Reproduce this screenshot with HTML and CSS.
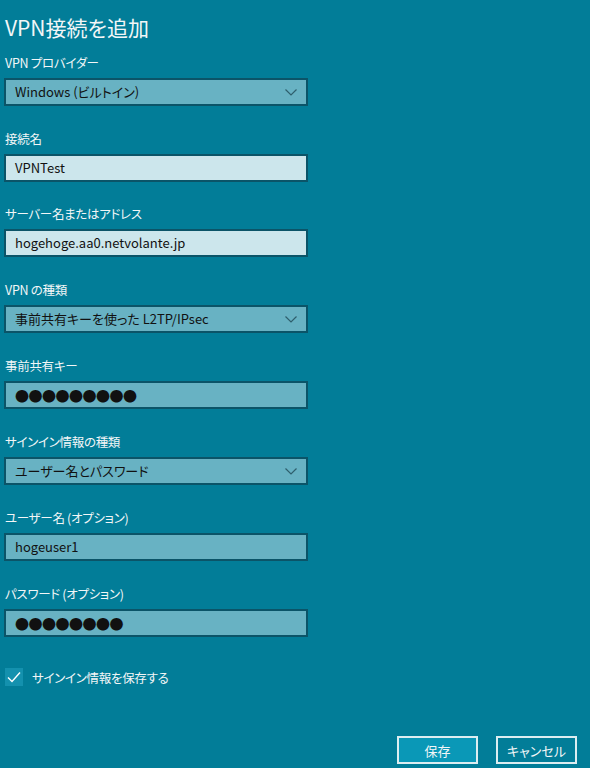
FILE: index.html
```html
<!doctype html>
<html>
  <head>
    <meta charset="utf-8">
    <title>VPN接続を追加</title>
    <link rel="stylesheet" href="styles.css">
  </head>
  <body>
    <div class="panel">
      <h1 class="title">VPN接続を追加</h1>

      <div class="field">
        <div class="label">VPN プロバイダー</div>
        <div class="box select">Windows (ビルトイン)
          <svg class="chev" width="12" height="7" viewBox="0 0 12 7"><polyline points="0.5,0.5 6,6 11.5,0.5" fill="none" stroke="#2f5f6c" stroke-width="1.2"/></svg>
        </div>
      </div>

      <div class="field">
        <div class="label">接続名</div>
        <div class="box text">VPNTest</div>
      </div>

      <div class="field">
        <div class="label">サーバー名またはアドレス</div>
        <div class="box text">hogehoge.aa0.netvolante.jp</div>
      </div>

      <div class="field">
        <div class="label">VPN の種類</div>
        <div class="box select">事前共有キーを使った L2TP/IPsec
          <svg class="chev" width="12" height="7" viewBox="0 0 12 7"><polyline points="0.5,0.5 6,6 11.5,0.5" fill="none" stroke="#2f5f6c" stroke-width="1.2"/></svg>
        </div>
      </div>

      <div class="field">
        <div class="label">事前共有キー</div>
        <div class="box secret">●●●●●●●●●</div>
      </div>

      <div class="field">
        <div class="label">サインイン情報の種類</div>
        <div class="box select">ユーザー名とパスワード
          <svg class="chev" width="12" height="7" viewBox="0 0 12 7"><polyline points="0.5,0.5 6,6 11.5,0.5" fill="none" stroke="#2f5f6c" stroke-width="1.2"/></svg>
        </div>
      </div>

      <div class="field">
        <div class="label">ユーザー名 (オプション)</div>
        <div class="box">hogeuser1</div>
      </div>

      <div class="field">
        <div class="label">パスワード (オプション)</div>
        <div class="box secret">●●●●●●●●</div>
      </div>

      <div class="check-row">
        <span class="check">
          <svg width="14" height="12" viewBox="0 0 14 12"><polyline points="1,6.5 5,10.5 13,1.5" fill="none" stroke="#fff" stroke-width="1.4"/></svg>
        </span>
        <span class="check-text">サインイン情報を保存する</span>
      </div>
    </div>

    <div class="buttons">
      <button class="btn primary">保存</button>
      <button class="btn">キャンセル</button>
    </div>
  </body>
</html>
```

FILE: styles.css
```css
html, body {
  margin: 0;
  height: 100%;
}

body {
  background: #027d98;
  color: #f2f6f7;
  font-family: "Noto Sans CJK JP", "Noto Sans", sans-serif;
  font-feature-settings: "palt";
}

.panel {
  width: 304px;
  padding: 12px 0 0 4px;
}

.title {
  margin: 0 0 12px 1px;
  font-size: 21px;
  font-weight: normal;
  line-height: 30px;
}

.field {
  margin-bottom: 24px;
}

.field:nth-of-type(2) {
  margin-bottom: 23px;
}

.label {
  margin-left: 1px;
  font-size: 12.5px;
  letter-spacing: -0.3px;
  line-height: 18px;
  margin-bottom: 6px;
}

.box {
  position: relative;
  box-sizing: border-box;
  width: 304px;
  height: 28px;
  border: 2px solid #0b5468;
  background: #68b2c3;
  color: #111;
  font-size: 13px;
  line-height: 24px;
  padding-left: 9px;
}

.box.text {
  background: #cce6ec;
}

.box.secret {
  font-size: 14px;
  letter-spacing: -0.5px;
}

.chev {
  position: absolute;
  right: 9px;
  top: 9px;
}

.check-row {
  display: flex;
  align-items: center;
  gap: 9px;
  margin-top: 31px;
  height: 18px;
}

.check {
  display: flex;
  align-items: center;
  justify-content: center;
  width: 18px;
  height: 18px;
  background: #1491ae;
  margin-left: 1px;
}

.check-text {
  font-size: 12.5px;
  letter-spacing: -0.3px;
}

.buttons {
  display: flex;
  justify-content: flex-end;
  gap: 18px;
  padding-right: 13px;
  margin-top: 50px;
}

.btn {
  width: 81px;
  height: 28px;
  border: 2px solid #dcedf1;
  background: #027d98;
  color: #f2f6f7;
  font-family: inherit;
  font-feature-settings: "palt";
  font-size: 13px;
  padding: 0;
}

.btn.primary {
  background: #0a98b7;
}
```
